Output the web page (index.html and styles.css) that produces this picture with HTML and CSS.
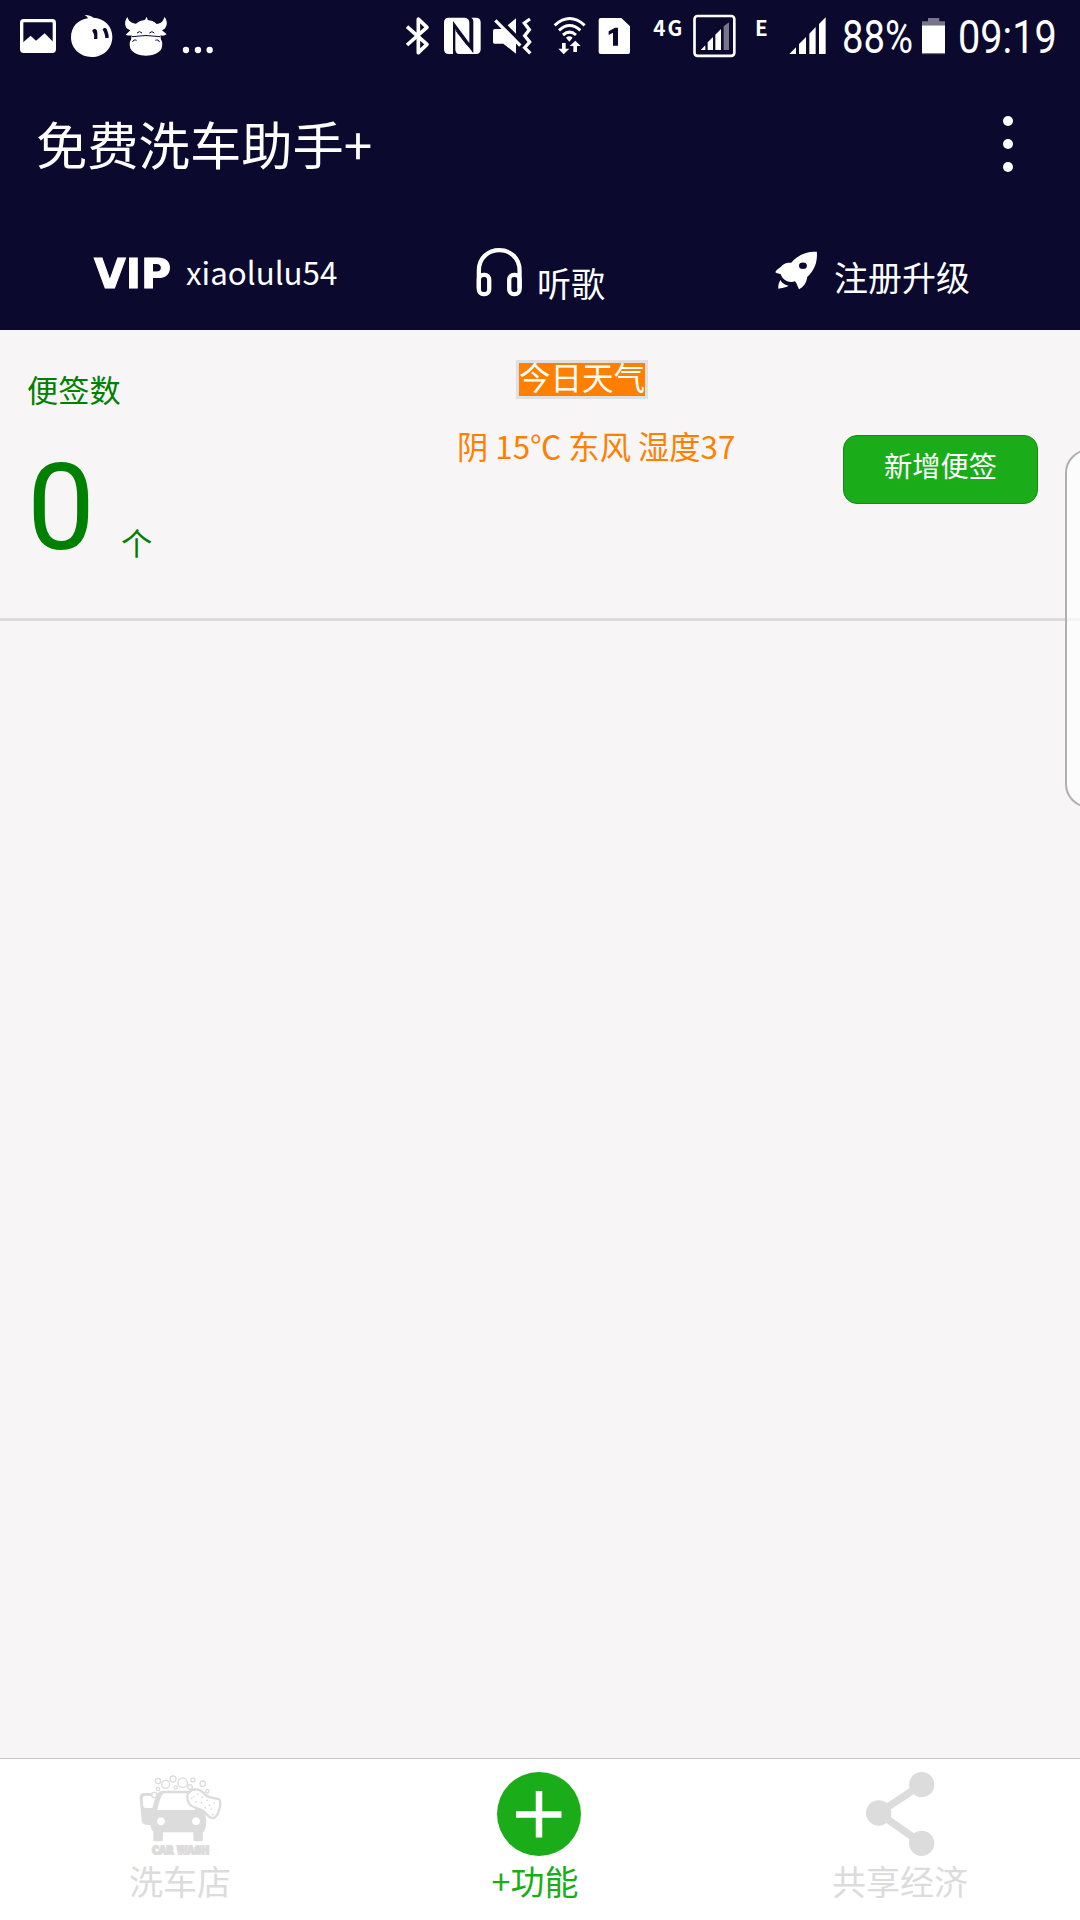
FILE: index.html
```html
<!DOCTYPE html>
<html lang="zh-CN">
<head>
<meta charset="utf-8">
<title>免费洗车助手+</title>
<link rel="stylesheet" href="styles.css">
</head>
<body>
<div class="screen">
  <header class="header">
    <div class="status">
      <div class="status-left">
        <svg width="37" height="72" viewBox="57 0 111 216"><rect x="65" y="62" width="98" height="92" rx="6" fill="none" stroke="#fff" stroke-width="10"/><path d="M66 130 92 107 108 122 134 100 162 128V156H66Z" fill="#fff"/></svg>
        <svg class="gap-14" width="43" height="72" viewBox="210 0 129 216"><path d="M264 55C262 50 258 47 253 45c10-1 20 2 27 8 33 2 57 25 57 57 0 36-27 61-62 61s-62-26-62-59c0-32 22-54 51-57Z" fill="#fff"/><path d="M277 93c0-7 12-8 14-1 2 9 1 17 1 25h-10c2-10 0-16-5-24ZM308 89c1-6 11-7 13 0 3 9 6 17 5 25h-10c-1-10-3-18-8-25Z" fill="#0b092d"/></svg>
        <svg class="gap-11" width="43" height="72" viewBox="372 0 129 216"><path d="M382 51c-9 12-9 28 1 36l8 4-14 13c7 3 13 3 18 2l-2 13c-6 7-4 20-1 28 7 13 27 20 46 20s39-7 46-20c3-8 5-21-1-28l-2-13c7 2 13 1 19-3l-14-12 7-4c10-9 10-26 0-36-3 13-10 20-23 21-8-8-17-11-27-12 0-4-2-7-5-9 0 4-1 7-4 9-9 1-18 4-26 11-13-1-22-7-26-20Z" fill="#fff"/><path d="M411 99q8-8 15 0M448 99q8-8 15 0M396 110q42-7 84 0M398 126q2-9 12-5M478 126q-2-9-12-5" fill="none" stroke="#0b092d" stroke-width="3"/></svg>
        <svg class="gap-15" width="32" height="72" viewBox="546 0 96 216" fill="#fff"><circle cx="558" cy="150" r="9.5"/><circle cx="594" cy="150" r="9.5"/><circle cx="629" cy="150" r="9.5"/></svg>
      </div>
      <div class="status-right">
        <svg width="25" height="72" viewBox="45 0 75 216"><path d="M51 80 111 133 85 158V57L111 82 51 135" fill="none" stroke="#fff" stroke-width="11" stroke-linejoin="round"/></svg>
        <svg class="gap-13" width="39" height="72" viewBox="159 0 117 216" fill="#fff"><path d="M176 53h48q14 1 14 15v61L189 63v99h-13q-14 0-14-14V67q0-14 14-14Z"/><path d="M244 53h14q14 0 14 14v81q0 14-14 14h-50q-12 0-12-14V88l54 72V64q0-7-6-11Z"/><path d="M197 91l41 51" stroke="#0b092d" stroke-width="3"/><path d="M203 100l27 36v-14l-27-35Z" fill="#0b092d"/></svg>
        <svg class="gap-10" width="40" height="72" viewBox="306 0 120 216"><path d="M314 87h24l40 40v34l-38-30h-26q-5 0-5-5V92q0-5 5-5ZM353 76l25-21v46Z" fill="#fff"/><path d="M321 56 397 132" stroke="#0b092d" stroke-width="6"/><path d="M316 61 391 137" stroke="#fff" stroke-width="10"/><path d="M420 57l-17 12 15 20-14 18 15 19-15 17 17 17" fill="none" stroke="#fff" stroke-width="10"/></svg>
        <svg class="gap-21" width="33" height="72" viewBox="489 0 99 216"><g fill="none" stroke="#fff" stroke-width="9"><path d="M494 76q45-41 90 0M507 91q32-29 64 0M519 105q20-17 39 0"/></g><path d="M528 113q10-8 20 0l-10 12ZM516 129h11v17h11l-17 17-16-17h11ZM550 156v-18h-11l17-16 16 16h-11v18Z" fill="#fff"/></svg>
        <svg class="gap-12" width="33" height="72" viewBox="624 0 99 216"><path d="M632 54h62l26 25v77q0 6-6 6h-82q-6 0-6-6V60q0-6 6-6Z" fill="#fff"/><path d="M669 137V98l-13 7V94l19-11h9v54Z" fill="#0b092d"/></svg>
        <svg class="gap-22" width="31" height="72" viewBox="790 0 93 216"><text class="net" x="791" y="107" textLength="87" lengthAdjust="spacing">4G</text></svg>
        <svg class="gap-9" width="43" height="72" viewBox="909 0 129 216"><rect x="913.500" y="48" width="119.500" height="119.500" rx="9" fill="none" stroke="#fff" stroke-width="8"/><path d="M932 150l14-14v14ZM953 150v-23l16-16v39ZM976 150v-46l17-17v63Z" fill="#fff"/><path d="M1001 150V79l16-12v83Z" fill="#77758b"/></svg>
        <svg class="gap-20" width="12" height="72" viewBox="78 0 36 216"><text class="net" x="75" y="107">E</text></svg>
        <svg class="gap-21" width="38" height="72" viewBox="177 0 114 216"><path d="M178 162l20-20v20ZM207 162v-30l21-21v51ZM238 162v-61l19-20v81ZM267 162V72l20-20v110Z" fill="#fff"/></svg>
        <svg class="gap-13" width="76" height="72" viewBox="330 0 228 216"><text class="clock" x="336" y="159" textLength="213" lengthAdjust="spacingAndGlyphs">88%</text></svg>
        <svg class="gap-5" width="25" height="72" viewBox="573 0 75 216"><path d="M594 54h34v10h17v12h-69V64h18Z" fill="#77758b"/><path d="M576 76h69v84h-69Z" fill="#fff"/><path d="M576 161h69" stroke="#77758b" stroke-width="3"/></svg>
        <svg class="gap-11" width="104" height="72" viewBox="681 0 312 216"><text class="clock" x="684" y="159" textLength="296" lengthAdjust="spacingAndGlyphs">09:19</text></svg>
      </div>
    </div>
    <div class="titlebar">
      <h1>免费洗车助手+</h1>
      <div class="more"><i></i><i></i><i></i></div>
    </div>
    <nav class="menu">
      <a class="vip"><b>VIP</b><span>xiaolulu54</span></a>
      <a class="music"><svg width="47" height="50" viewBox="102 84 131.600 140"><g fill="none" stroke="#fff" stroke-width="12"><path d="M110 200V150C110 74 224 74 224 150V200"/><rect x="110" y="162" width="29" height="54" rx="13"/><rect x="195" y="162" width="29" height="54" rx="13"/></g></svg><span>听歌</span></a>
      <a class="upgrade"><svg width="44" height="41" viewBox="936 92 123 115"><path fill="#fff" fill-rule="evenodd" d="M1056 97c-29-3-54 10-72 31-11 0-19 1-28 10-7 7-14 9-16 15-1 4 9 5 15 7 1 7 7 14 16 19 8 3 16 4 23 1 5 2 7 14 12 22 13-6 21-18 23-34 22-21 29-44 27-71ZM1017 127a11 9 0 1 1 0 18 11 9 0 1 1 0-18ZM954 176c3 8 14 14 23 17-10 4-20 6-29 8-1-9 1-17 6-25Z"/></svg><span>注册升级</span></a>
    </nav>
  </header>
  <main class="main">
    <section class="summary">
      <div class="count">
        <div class="label">便签数</div>
        <div class="value"><strong>0</strong><span>个</span></div>
      </div>
      <div class="weather">
        <div class="tag">今日天气</div>
        <div class="detail">阴 15℃ 东风 湿度37</div>
      </div>
      <button class="add">新增便签</button>
    </section>
  </main>
  <footer class="tabs">
    <a class="tab wash-shop">
      <svg width="84" height="84" viewBox="87 81 252 252">
        <g fill="none" stroke="#dcdcdc" stroke-width="4"><circle cx="144" cy="108" r="8"/><circle cx="167" cy="118" r="12"/><circle cx="189" cy="102" r="9"/><circle cx="218" cy="113" r="14"/><circle cx="249" cy="105" r="6"/><circle cx="278" cy="116" r="8"/><circle cx="292" cy="139" r="5"/><circle cx="144" cy="132" r="5"/><circle cx="197" cy="127" r="5"/><circle cx="240" cy="126" r="7"/><circle cx="133" cy="150" r="8"/></g>
        <path fill="#dcdcdc" fill-rule="evenodd" d="M158 137h76c18 0 23 13 30 53 18 7 25 20 25 40 0 15-3 25-10 32v22q0 5-6 5h-17q-6 0-6-5v-22h-91v22q0 5-6 5h-17q-6 0-6-5v-24c-5-5-8-12-9-20-16 0-25-1-26-14l-6-65c-1-12 4-17 16-17h20l-2 9h-16q-9 0-9 9l2 22q0 5 9 5h18c9-31 12-51 31-52ZM161 145c-8 5-14 29-19 50h114c-8-31-10-50-21-50ZM153 217a12 12 0 1 0 .1 0ZM258 217a12 12 0 1 0 .1 0Z"/>
        <path d="M236 143c12-14 32-13 44 0 14 18 30 14 45 19 13 5 2 45-10 55-12 8-21-6-33-17-14-14-31-8-43-22-7-9-10-25-3-35Z" fill="#fff" stroke="#dcdcdc" stroke-width="7"/>
        <path d="M250 156h1m12-8h1m12 9h1m-20 14h1m16 3h1m16-8h1m6 15h1m13-7h1m-10 18h1m4 17h1m-24-21h1m-42-28h1" fill="none" stroke="#dcdcdc" stroke-width="5" stroke-linecap="round"/>
        <text class="wash" x="126" y="328" textLength="172" lengthAdjust="spacingAndGlyphs">CAR WASH</text>
      </svg>
      <span>洗车店</span>
    </a>
    <a class="tab active">
      <svg width="84" height="84" viewBox="0 0 84 84"><circle cx="42" cy="42" r="42" fill="#1aad19"/><path d="M19 42.500h45.500M42 19v46.500" stroke="#fff" stroke-width="6.500"/></svg>
      <span>+功能</span>
    </a>
    <a class="tab share">
      <svg width="68" height="84" viewBox="197 81 204 252" fill="#dcdcdc"><path d="M364 119 235 204 364 295" fill="none" stroke="#dcdcdc" stroke-width="22"/><circle cx="364" cy="119" r="38"/><circle cx="235" cy="204" r="38"/><circle cx="364" cy="295" r="38"/></svg>
      <span>共享经济</span>
    </a>
  </footer>
  <div class="edge-handle"></div>
</div>
</body>
</html>
```

FILE: styles.css
```css
* { box-sizing: border-box; }
body { margin: 0; }

.screen {
  position: relative;
  display: flex;
  flex-direction: column;
  width: 1080px;
  height: 1920px;
  overflow: hidden;
  background: #f7f5f6;
  font-family: "Noto Sans CJK SC", sans-serif;
  font-weight: 400;
}

svg { display: block; flex: none; overflow: visible; }

/* header */
.header { height: 330px; background: #0b092d; color: #fff; }
.status { display: flex; justify-content: space-between; height: 72px; padding: 0 19px; }
.status-left, .status-right { display: flex; }
.gap-5 { margin-left: 5px; }
.gap-9 { margin-left: 9px; }
.gap-10 { margin-left: 10px; }
.gap-11 { margin-left: 11px; }
.gap-12 { margin-left: 12px; }
.gap-13 { margin-left: 13px; }
.gap-14 { margin-left: 14px; }
.gap-15 { margin-left: 15px; }
.gap-20 { margin-left: 20px; }
.gap-21 { margin-left: 21px; }
.gap-22 { margin-left: 22px; }
.net { font: 700 62px "Noto Sans CJK SC", sans-serif; fill: #fff; }
.clock { font: 400 137px Roboto, sans-serif; fill: #fff; }

.titlebar {
  display: flex;
  justify-content: space-between;
  height: 138px;
  padding: 36px 67px 0 36px;
}
h1 { margin: 0; font-size: 51.300px; line-height: 70px; font-weight: inherit; }
.more { display: flex; flex-direction: column; gap: 13px; padding-top: 8px; }
.more i { width: 10px; height: 10px; border-radius: 50%; background: #fff; }

.menu { display: flex; height: 120px; font-size: 34px; line-height: 40px; }
.menu a { display: flex; align-items: flex-start; }
.vip { width: 476px; padding-left: 94px; }
.vip b {
  width: 92px;
  padding-top: 43px;
  font: 700 41px/42px "DejaVu Sans", sans-serif;
  -webkit-text-stroke: 1px #fff;
  filter: blur(.7px);
}
.vip span { padding-top: 42px; font-size: 31.300px; }
.music { width: 298px; padding-top: 37px; }
.music span { padding: 16px 0 0 14px; }
.upgrade { padding-top: 40px; }
.upgrade span { padding: 7px 0 0 16px; }

/* summary */
.main { flex: 1; }
.summary {
  display: flex;
  height: 291px;
  border-bottom: 3px solid #dcdadb;
}
.count { width: 457px; padding: 39px 0 0 27px; color: #008000; font-size: 31.200px; }
.label { line-height: 40px; }
.value { display: flex; margin-top: 29px; }
.value strong { width: 94px; font: 400 121px/140px Roboto, sans-serif; }
.value span { padding-top: 84px; line-height: 40px; }
.weather {
  display: flex;
  flex-direction: column;
  width: 386px;
  padding-top: 30px;
  color: #ff8000;
  font-size: 31.300px;
}
.tag {
  width: 132px;
  height: 39px;
  margin-left: 59px;
  border: 3px solid #e0e0e0;
  background: #ff8000;
  color: #fff;
  font-size: 31.500px;
  line-height: 27px;
  white-space: nowrap;
}
.detail { margin-top: 27px; line-height: 40px; white-space: nowrap; }
.add {
  width: 195px;
  height: 69px;
  margin-top: 105px;
  padding: 0 0 9px;
  border: 1px solid #158a14;
  border-radius: 14px;
  background: #1aad19;
  color: #fff;
  font: inherit;
  font-size: 28.300px;
  line-height: 40px;
}

/* bottom tabs */
.tabs {
  display: flex;
  height: 162px;
  border-top: 1px solid #c8c7c8;
  background: #fff;
  color: #dcdcdc;
  font-size: 34px;
  line-height: 50px;
}
.tab { display: flex; flex: 1; flex-direction: column; align-items: center; padding-top: 13px; }
.wash-shop svg { margin-left: 2px; }
.active { color: #1aad19; }
.active svg { margin-right: 2px; }
.active span { margin-right: 10px; }
.wash { font: 900 32px "DejaVu Sans", sans-serif; fill: #fff; stroke: #dcdcdc; stroke-width: 6px; }

/* edge panel handle floating over the page */
.edge-handle {
  position: absolute;
  top: 449px;
  right: -40px;
  width: 55px;
  height: 359px;
  border: 2px solid #b0b0b0;
  border-radius: 24px;
  background: rgba(255, 255, 255, .7);
}
```
